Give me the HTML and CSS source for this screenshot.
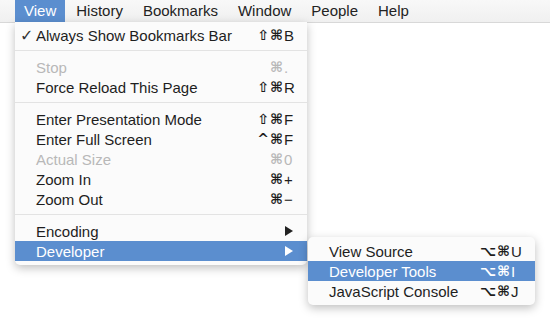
FILE: index.html
```html
<!DOCTYPE html>
<html>
<head>
  <title>View Menu</title>
  <link rel="stylesheet" href="styles.css">
</head>
<body>

<div class="menubar">
  <span class="menubar-item active">View</span>
  <span class="menubar-item">History</span>
  <span class="menubar-item">Bookmarks</span>
  <span class="menubar-item">Window</span>
  <span class="menubar-item">People</span>
  <span class="menubar-item">Help</span>
</div>

<div class="menu view-menu">
  <div class="menu-row">
    <span class="check">✓</span>
    <span class="label">Always Show Bookmarks Bar</span>
    <span class="shortcut"><span class="mods">⇧⌘</span><span class="key">B</span></span>
  </div>
  <div class="separator"></div>
  <div class="menu-row disabled">
    <span class="check"></span>
    <span class="label">Stop</span>
    <span class="shortcut"><span class="mods">⌘</span><span class="key">.</span></span>
  </div>
  <div class="menu-row">
    <span class="check"></span>
    <span class="label">Force Reload This Page</span>
    <span class="shortcut"><span class="mods">⇧⌘</span><span class="key">R</span></span>
  </div>
  <div class="separator"></div>
  <div class="menu-row">
    <span class="check"></span>
    <span class="label">Enter Presentation Mode</span>
    <span class="shortcut"><span class="mods">⇧⌘</span><span class="key">F</span></span>
  </div>
  <div class="menu-row">
    <span class="check"></span>
    <span class="label">Enter Full Screen</span>
    <span class="shortcut"><span class="mods">^⌘</span><span class="key">F</span></span>
  </div>
  <div class="menu-row disabled">
    <span class="check"></span>
    <span class="label">Actual Size</span>
    <span class="shortcut"><span class="mods">⌘</span><span class="key">0</span></span>
  </div>
  <div class="menu-row">
    <span class="check"></span>
    <span class="label">Zoom In</span>
    <span class="shortcut"><span class="mods">⌘</span><span class="key">+</span></span>
  </div>
  <div class="menu-row">
    <span class="check"></span>
    <span class="label">Zoom Out</span>
    <span class="shortcut"><span class="mods">⌘</span><span class="key">−</span></span>
  </div>
  <div class="separator"></div>
  <div class="menu-row">
    <span class="check"></span>
    <span class="label">Encoding</span>
    <span class="shortcut"><span class="arrow"></span></span>
  </div>
  <div class="menu-row selected">
    <span class="check"></span>
    <span class="label">Developer</span>
    <span class="shortcut"><span class="arrow"></span></span>
  </div>
</div>

<div class="menu sub-menu">
  <div class="menu-row">
    <span class="label">View Source</span>
    <span class="shortcut"><span class="mods">⌥⌘</span><span class="key">U</span></span>
  </div>
  <div class="menu-row selected">
    <span class="label">Developer Tools</span>
    <span class="shortcut"><span class="mods">⌥⌘</span><span class="key">I</span></span>
  </div>
  <div class="menu-row">
    <span class="label">JavaScript Console</span>
    <span class="shortcut"><span class="mods">⌥⌘</span><span class="key">J</span></span>
  </div>
</div>

</body>
</html>
```

FILE: styles.css
```css
body {
  margin: 0;
  background-color: #fff;
  font-family: "Liberation Sans", "DejaVu Sans", sans-serif;
  font-size: 15px;
  color: #1e1e1e;
}

.menubar {
  display: flex;
  height: 22px;
  padding-left: 15px;
  background: linear-gradient(#f8f8f8, #f0f0f0);
  border-bottom: 1px solid #d8d8d8;
  box-shadow: 0 3px 9px rgba(0, 0, 0, 0.14);
}

.menubar-item {
  padding: 0 9px 0 9px;
  line-height: 22px;
  color: #222;
}

.menubar-item + .menubar-item {
  margin-left: 2px;
}

.menubar-item.active {
  background-color: #5b8ecf;
  color: #fff;
}

.menu {
  position: absolute;
  background-color: #fbfbfb;
  box-shadow: 0 3px 10px rgba(0, 0, 0, 0.25);
}

.view-menu {
  top: 22px;
  left: 15px;
  width: 292px;
  padding: 3px 0 4px;
  border-radius: 0 0 5px 5px;
}

.sub-menu {
  top: 237px;
  left: 308px;
  width: 227px;
  padding: 4px 0;
  border-radius: 5px;
}

.menu-row {
  display: grid;
  grid-template-columns: 16px 1fr auto;
  align-items: center;
  height: 20px;
  padding: 0 12px 0 5px;
}

.sub-menu .menu-row {
  grid-template-columns: 1fr auto;
  padding: 0 13px 0 21px;
}

.menu-row.disabled {
  color: #b8b8b8;
}

.menu-row.selected {
  background-color: #5b8ecf;
  color: #fff;
}

.check {
  font-family: "DejaVu Sans", sans-serif;
  font-size: 16px;
  font-weight: bold;
  color: #333;
}

.shortcut {
  display: flex;
  justify-content: flex-end;
}

.mods {
  font-family: "DejaVu Sans", sans-serif;
  font-size: 14px;
  font-weight: bold;
  letter-spacing: 1px;
}

.key {
  width: 11px;
}

.arrow {
  width: 0;
  height: 0;
  margin-right: 2px;
  border-top: 5px solid transparent;
  border-bottom: 5px solid transparent;
  border-left: 8px solid #222;
}

.selected .arrow {
  border-left-color: #fff;
}

.separator {
  height: 1px;
  margin: 5px 0 6px;
  background-color: #e3e3e3;
}
```
